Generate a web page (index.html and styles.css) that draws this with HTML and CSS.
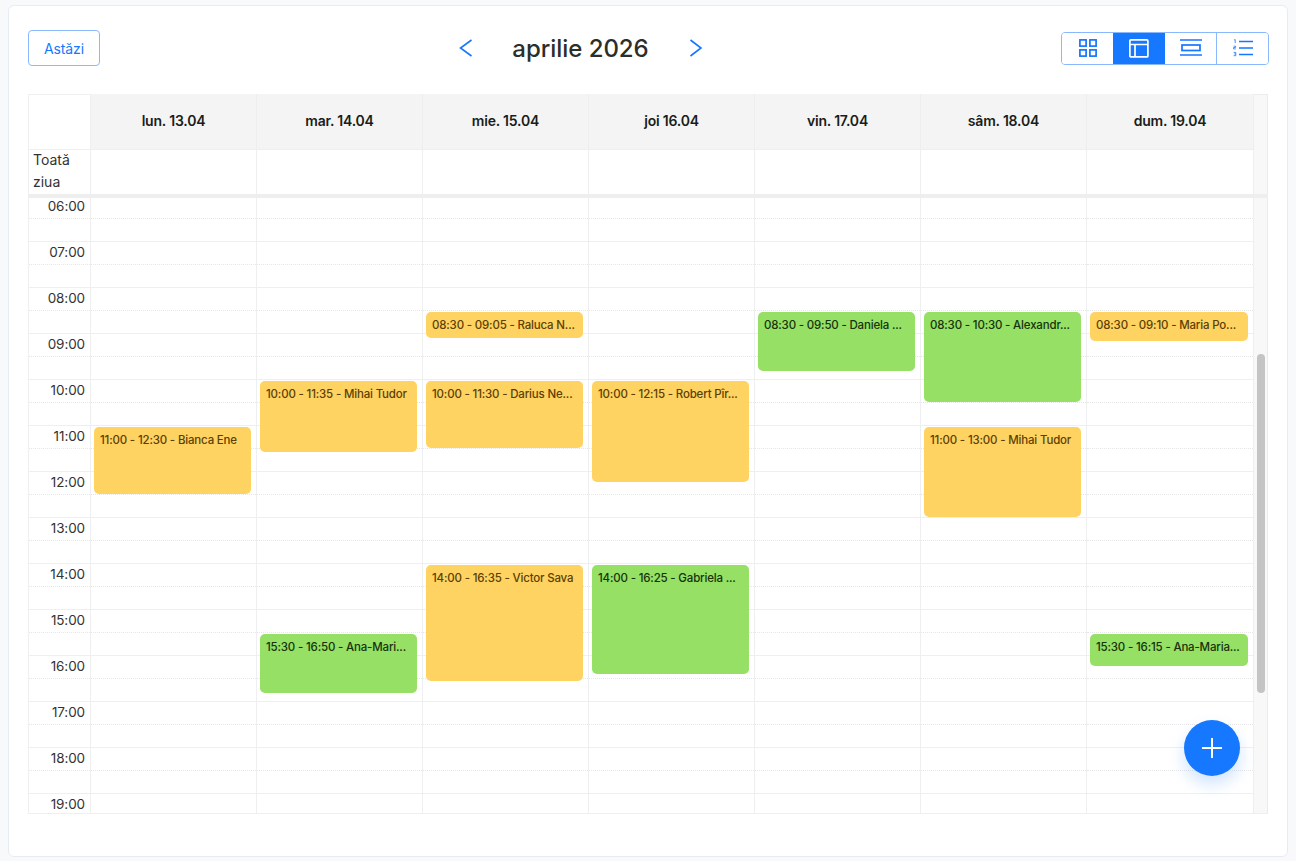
FILE: index.html
```html
<!DOCTYPE html>
<html lang="ro">
<head>
<meta charset="utf-8">
<title>Calendar</title>
<link rel="stylesheet" href="styles.css">
</head>
<body>
<main class="card">
  <header class="toolbar">
    <button class="today">Astăzi</button>
    <div class="month-nav">
      <button class="chev"><svg width="14" height="18" viewBox="0 0 14 18"><path d="M13.500 1 2.500 9l11 8"/></svg></button>
      <h1 class="month">aprilie 2026</h1>
      <button class="chev"><svg width="14" height="18" viewBox="0 0 14 18"><path d="M1.500 1 12 9 1.500 17"/></svg></button>
    </div>
    <div class="views">
      <button class="view"><svg width="18" height="18" viewBox="0 0 18 18"><rect x=".9" y=".9" width="6.200" height="6.200"/><rect x="10.900" y=".9" width="6.200" height="6.200"/><rect x=".9" y="10.900" width="6.200" height="6.200"/><rect x="10.900" y="10.900" width="6.200" height="6.200"/></svg></button>
      <button class="view active"><svg width="20" height="19" viewBox="0 0 20 19"><rect x=".9" y=".9" width="18" height="17" rx="1"/><path d="M1 5.500h18M6 5.500v12.500"/></svg></button>
      <button class="view divided"><svg width="22" height="18" viewBox="0 0 22 18"><path d="M0 1h22M0 16h22"/><rect x="2" y="6" width="18" height="5.500"/></svg></button>
      <button class="view"><svg width="20" height="18" viewBox="0 0 20 18"><path d="M6 2.500h14M6 9h14M6 15.500h14"/><path class="num" d="M1 1 2.200.6V4M.6 7.200h2v1.300h-2v1.400h2.200M.6 13.400h2.200v3.300H.6M1.200 15h1.600"/></svg></button>
    </div>
  </header>

  <section class="calendar">
    <div class="top">
      <div class="top-grid">
        <div class="corner"></div>
        <div class="day-head">lun. 13.04</div>
        <div class="day-head">mar. 14.04</div>
        <div class="day-head">mie. 15.04</div>
        <div class="day-head">joi 16.04</div>
        <div class="day-head">vin. 17.04</div>
        <div class="day-head">sâm. 18.04</div>
        <div class="day-head">dum. 19.04</div>
        <div class="allday-label"><div class="allday-text">Toată<br>ziua</div></div>
        <div class="allday"></div><div class="allday"></div><div class="allday"></div><div class="allday"></div><div class="allday"></div><div class="allday"></div><div class="allday"></div>
      </div>
      <div class="rail-top"></div>
    </div>
    <div class="divider"></div>
    <div class="body">
      <div class="viewport">
        <div class="time-grid">
          <div class="times">
            <div class="hour"><div class="half">06:00</div></div>
            <div class="hour"><div class="half">07:00</div></div>
            <div class="hour"><div class="half">08:00</div></div>
            <div class="hour"><div class="half">09:00</div></div>
            <div class="hour"><div class="half">10:00</div></div>
            <div class="hour"><div class="half">11:00</div></div>
            <div class="hour"><div class="half">12:00</div></div>
            <div class="hour"><div class="half">13:00</div></div>
            <div class="hour"><div class="half">14:00</div></div>
            <div class="hour"><div class="half">15:00</div></div>
            <div class="hour"><div class="half">16:00</div></div>
            <div class="hour"><div class="half">17:00</div></div>
            <div class="hour"><div class="half">18:00</div></div>
            <div class="hour"><div class="half">19:00</div></div>
          </div>
          <div class="day">
            <div class="hour"><div class="half"></div></div><div class="hour"><div class="half"></div></div><div class="hour"><div class="half"></div></div><div class="hour"><div class="half"></div></div><div class="hour"><div class="half"></div></div><div class="hour"><div class="half"></div></div><div class="hour"><div class="half"></div></div><div class="hour"><div class="half"></div></div><div class="hour"><div class="half"></div></div><div class="hour"><div class="half"></div></div><div class="hour"><div class="half"></div></div><div class="hour"><div class="half"></div></div><div class="hour"><div class="half"></div></div><div class="hour"><div class="half"></div></div>
            <div class="event yellow" style="top:231px;height:67px">11:00 - 12:30 - Bianca Ene</div>
          </div>
          <div class="day">
            <div class="hour"><div class="half"></div></div><div class="hour"><div class="half"></div></div><div class="hour"><div class="half"></div></div><div class="hour"><div class="half"></div></div><div class="hour"><div class="half"></div></div><div class="hour"><div class="half"></div></div><div class="hour"><div class="half"></div></div><div class="hour"><div class="half"></div></div><div class="hour"><div class="half"></div></div><div class="hour"><div class="half"></div></div><div class="hour"><div class="half"></div></div><div class="hour"><div class="half"></div></div><div class="hour"><div class="half"></div></div><div class="hour"><div class="half"></div></div>
            <div class="event yellow" style="top:185px;height:71px">10:00 - 11:35 - Mihai Tudor</div>
            <div class="event green" style="top:438px;height:59px">15:30 - 16:50 - Ana-Mari...</div>
          </div>
          <div class="day">
            <div class="hour"><div class="half"></div></div><div class="hour"><div class="half"></div></div><div class="hour"><div class="half"></div></div><div class="hour"><div class="half"></div></div><div class="hour"><div class="half"></div></div><div class="hour"><div class="half"></div></div><div class="hour"><div class="half"></div></div><div class="hour"><div class="half"></div></div><div class="hour"><div class="half"></div></div><div class="hour"><div class="half"></div></div><div class="hour"><div class="half"></div></div><div class="hour"><div class="half"></div></div><div class="hour"><div class="half"></div></div><div class="hour"><div class="half"></div></div>
            <div class="event yellow" style="top:116px;height:26px">08:30 - 09:05 - Raluca N...</div>
            <div class="event yellow" style="top:185px;height:67px">10:00 - 11:30 - Darius Ne...</div>
            <div class="event yellow" style="top:369px;height:116px">14:00 - 16:35 - Victor Sava</div>
          </div>
          <div class="day">
            <div class="hour"><div class="half"></div></div><div class="hour"><div class="half"></div></div><div class="hour"><div class="half"></div></div><div class="hour"><div class="half"></div></div><div class="hour"><div class="half"></div></div><div class="hour"><div class="half"></div></div><div class="hour"><div class="half"></div></div><div class="hour"><div class="half"></div></div><div class="hour"><div class="half"></div></div><div class="hour"><div class="half"></div></div><div class="hour"><div class="half"></div></div><div class="hour"><div class="half"></div></div><div class="hour"><div class="half"></div></div><div class="hour"><div class="half"></div></div>
            <div class="event yellow" style="top:185px;height:101px">10:00 - 12:15 - Robert Pîr...</div>
            <div class="event green" style="top:369px;height:109px">14:00 - 16:25 - Gabriela ...</div>
          </div>
          <div class="day">
            <div class="hour"><div class="half"></div></div><div class="hour"><div class="half"></div></div><div class="hour"><div class="half"></div></div><div class="hour"><div class="half"></div></div><div class="hour"><div class="half"></div></div><div class="hour"><div class="half"></div></div><div class="hour"><div class="half"></div></div><div class="hour"><div class="half"></div></div><div class="hour"><div class="half"></div></div><div class="hour"><div class="half"></div></div><div class="hour"><div class="half"></div></div><div class="hour"><div class="half"></div></div><div class="hour"><div class="half"></div></div><div class="hour"><div class="half"></div></div>
            <div class="event green" style="top:116px;height:59px">08:30 - 09:50 - Daniela ...</div>
          </div>
          <div class="day">
            <div class="hour"><div class="half"></div></div><div class="hour"><div class="half"></div></div><div class="hour"><div class="half"></div></div><div class="hour"><div class="half"></div></div><div class="hour"><div class="half"></div></div><div class="hour"><div class="half"></div></div><div class="hour"><div class="half"></div></div><div class="hour"><div class="half"></div></div><div class="hour"><div class="half"></div></div><div class="hour"><div class="half"></div></div><div class="hour"><div class="half"></div></div><div class="hour"><div class="half"></div></div><div class="hour"><div class="half"></div></div><div class="hour"><div class="half"></div></div>
            <div class="event green" style="top:116px;height:90px">08:30 - 10:30 - Alexandr...</div>
            <div class="event yellow" style="top:231px;height:90px">11:00 - 13:00 - Mihai Tudor</div>
          </div>
          <div class="day">
            <div class="hour"><div class="half"></div></div><div class="hour"><div class="half"></div></div><div class="hour"><div class="half"></div></div><div class="hour"><div class="half"></div></div><div class="hour"><div class="half"></div></div><div class="hour"><div class="half"></div></div><div class="hour"><div class="half"></div></div><div class="hour"><div class="half"></div></div><div class="hour"><div class="half"></div></div><div class="hour"><div class="half"></div></div><div class="hour"><div class="half"></div></div><div class="hour"><div class="half"></div></div><div class="hour"><div class="half"></div></div><div class="hour"><div class="half"></div></div>
            <div class="event yellow" style="top:116px;height:29px">08:30 - 09:10 - Maria Po...</div>
            <div class="event green" style="top:438px;height:32px">15:30 - 16:15 - Ana-Maria...</div>
          </div>
        </div>
      </div>
      <div class="rail"><div class="thumb"></div></div>
    </div>
  </section>

  <button class="fab"><svg width="22" height="22" viewBox="0 0 22 22"><path d="M11 1v20M1 11h20"/></svg></button>
</main>
</body>
</html>
```
FILE: styles.css
```css
* { box-sizing: border-box; }
html, body { height: 100%; }
body {
  margin: 0;
  padding: 5px 8px;
  background: #f8f9fb;
  font-family: Inter, "Noto Sans", sans-serif;
  color: #2b2e2b;
  overflow: hidden;
}
button { font: inherit; cursor: pointer; }

.card {
  position: relative;
  width: 1280px;
  height: 852px;
  padding: 24px 18px 0 19px;
  background: #fff;
  border: 1px solid #e8ebf2;
  border-radius: 6px;
}

.toolbar {
  display: flex;
  align-items: center;
  justify-content: space-between;
  height: 36px;
  margin-bottom: 28px;
}
.today {
  width: 72px;
  height: 36px;
  padding: 0;
  background: #fff;
  border: 1px solid #8ab8ff;
  border-radius: 4px;
  color: #1677ff;
  font-size: 14px;
  letter-spacing: -.1px;
}
.month-nav {
  display: flex;
  align-items: center;
  width: 245px;
  justify-content: space-between;
}
.chev {
  display: flex;
  padding: 0;
  background: none;
  border: 0;
}
.chev svg path { fill: none; stroke: #1677ff; stroke-width: 1.600; }
.month {
  margin: 0;
  font-size: 24px;
  font-weight: 500;
  letter-spacing: -.05px;
  color: #2b2e2b;
}

.views {
  display: flex;
  width: 208px;
  height: 33px;
  border: 1px solid #8ab8ff;
  border-radius: 4px;
  overflow: hidden;
}
.view {
  display: flex;
  align-items: center;
  justify-content: center;
  width: 52px;
  padding: 0;
  background: #fff;
  border: 0;
}
.view:first-child, .view:last-child { width: 51px; }
.view.divided { border-right: 1px solid #8ab8ff; }
.view svg rect, .view svg path { fill: none; stroke: #1677ff; stroke-width: 1.700; }
.view svg path.num { stroke-width: .8; }
.view.active { background: #1677ff; }
.view.active svg rect, .view.active svg path { stroke: #fff; }

.calendar { width: 1240px; }
.top { display: flex; }
.top-grid {
  display: grid;
  grid-template-columns: 63px repeat(6, 166px) 167px;
  grid-template-rows: 56px 44px;
  width: 1226px;
}
.corner { border: 1px solid #eeeff1; }
.day-head {
  display: flex;
  align-items: center;
  justify-content: center;
  padding-bottom: 2px;
  background: #f4f4f4;
  border-right: 1px solid #eeeeee;
  border-bottom: 1px solid #eeeff1;
  font-size: 14px;
  font-weight: 600;
  letter-spacing: -.2px;
  color: #1a1d1a;
}
.allday-label {
  padding-left: 4px;
  border-left: 1px solid #eeeff1;
  border-right: 1px solid #eeeff1;
  font-size: 14px;
  line-height: 22px;
  color: #333;
}
.allday-text { margin-top: -1px; }
.allday { border-right: 1px solid #eeeff1; }
.rail-top {
  width: 14px;
  background: #f8f8f8;
  border-right: 1px solid #ececec;
  border-top: 1px solid #ececec;
}
.divider { height: 4px; background: #eeeeee; }

.body { display: flex; height: 616px; border-bottom: 1px solid #eeeff1; }
.viewport { width: 1226px; overflow: hidden; }
.time-grid {
  display: grid;
  grid-template-columns: 63px repeat(6, 166px) 167px;
  margin-top: -2px;
}
.times {
  border-left: 1px solid #eeeff1;
  border-right: 1px solid #eeeff1;
}
.hour {
  height: 46px;
  border-bottom: 1px solid #eeeff1;
}
.half {
  height: 23px;
  border-bottom: 1px dotted #e6e6e8;
}
.times .half {
  padding-right: 5px;
  font-size: 13.500px;
  line-height: 20px;
  letter-spacing: -.1px;
  text-align: right;
  color: #333;
}
.day {
  position: relative;
  border-right: 1px solid #eeeff1;
}
.event {
  position: absolute;
  left: 3px;
  right: 5px;
  padding: 5px 6px 0;
  border-radius: 5px;
  font-size: 11.500px;
  font-weight: 500;
  line-height: 16px;
  letter-spacing: -.18px;
  white-space: nowrap;
  overflow: hidden;
}
.yellow { background: #ffd361; color: #5c3f04; }
.green { background: #95e065; color: #17330a; }

.rail {
  width: 14px;
  padding-top: 156px;
  background: #f8f8f8;
  border-right: 1px solid #ececec;
}
.thumb {
  width: 8px;
  height: 339px;
  margin-left: 3px;
  background: #c4c4c4;
  border-radius: 4px;
}

.fab {
  position: absolute;
  right: 47px;
  top: 714px;
  display: flex;
  align-items: center;
  justify-content: center;
  width: 56px;
  height: 56px;
  padding: 0;
  background: #1677ff;
  border: 0;
  border-radius: 50%;
  box-shadow: 0 8px 16px rgba(22, 119, 255, .2);
}
.fab svg path { fill: none; stroke: #fff; stroke-width: 2; }
```
